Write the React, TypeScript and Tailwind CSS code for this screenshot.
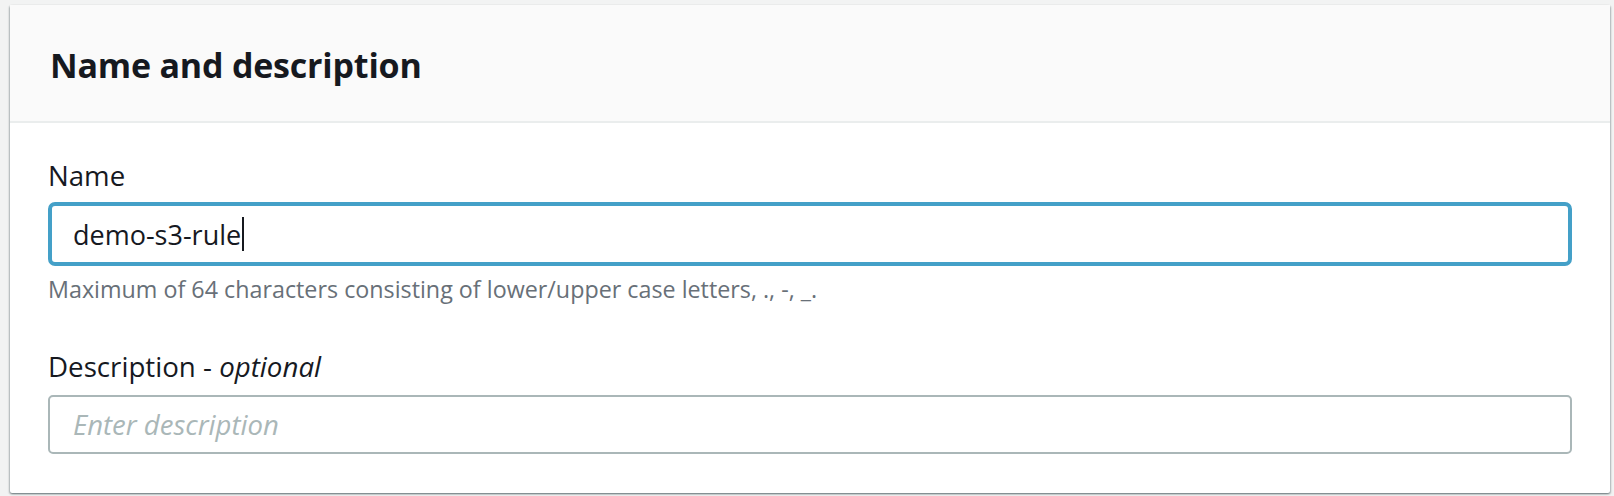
export default function App() {
  const font = { fontFamily: '"Open Sans", "Noto Sans", Arial, sans-serif' };
  return (
    <div className="w-[1614px] h-[496px] bg-[#f2f3f3] pt-[5px] pl-[10px]" style={font}>
      <div className="w-[1600px] h-[488px] bg-white rounded-[2px] shadow-[0_1px_2px_0_rgba(0,28,36,0.35),1px_1px_2px_0_rgba(0,28,36,0.2),-1px_1px_2px_0_rgba(0,28,36,0.2)] flex flex-col">
        <div className="h-[118px] bg-[#fafafa] border-b-[2px] border-[#eaeded] flex items-center pl-[40px]">
          <h2 className="text-[34px] font-bold text-[#16191f] leading-none tracking-[-0.2px] pt-[4px]">Name and description</h2>
        </div>
        <div className="pl-[38px] pr-[38px] pt-[34px] flex flex-col">
          <label className="text-[27.6px] text-[#16191f] leading-[36px]">Name</label>
          <div className="mt-[9px] h-[64px] border-[4px] border-[#44a0c8] rounded-[7px] flex items-center pl-[21px]">
            <span className="text-[27px] text-[#16191f] leading-none">demo-s3-rule</span>
            <span className="w-[2px] h-[34px] bg-[#16191f] ml-[1px]"></span>
          </div>
          <p className="mt-[8px] text-[23.3px] text-[#687078] leading-[30px]">
            Maximum of 64 characters consisting of lower/upper case letters, ., -, _.
          </p>
          <label className="mt-[44px] text-[27.7px] text-[#16191f] leading-[36px]">
            Description - <span className="italic">optional</span>
          </label>
          <div className="mt-[11px] h-[59px] border-[2px] border-[#aab7b8] rounded-[5px] flex items-center pl-[23px]">
            <span className="text-[27.5px] italic text-[#aab7b8] leading-none">Enter description</span>
          </div>
        </div>
      </div>
    </div>
  );
}
